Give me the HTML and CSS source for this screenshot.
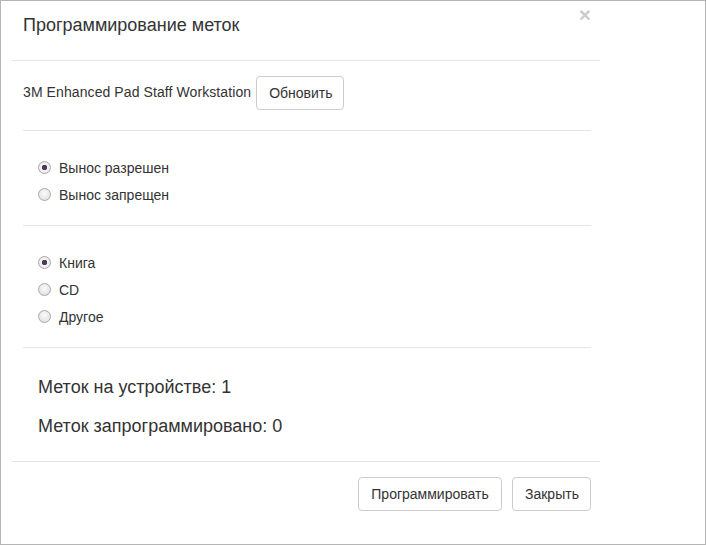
FILE: index.html
```html
<!DOCTYPE html>
<html lang="ru">
<head>
    <meta charset="UTF-8">
    <title>Программирование меток</title>
    <link rel="stylesheet" href="styles.css">
</head>
<body>
    <div class="frame">
        <div class="dialog">
            <div class="dialog-header">
                <h4 class="title">Программирование меток</h4>
                <span class="close">&times;</span>
            </div>
            <div class="dialog-body">
                <div class="section device">
                    <span class="device-name">3M Enhanced Pad Staff Workstation</span>
                    <button class="btn btn-refresh">Обновить</button>
                </div>
                <div class="section group">
                    <label class="radio"><input type="radio" name="exit" checked> Вынос разрешен</label>
                    <label class="radio"><input type="radio" name="exit"> Вынос запрещен</label>
                </div>
                <div class="section group">
                    <label class="radio"><input type="radio" name="kind" checked> Книга</label>
                    <label class="radio"><input type="radio" name="kind"> CD</label>
                    <label class="radio"><input type="radio" name="kind"> Другое</label>
                </div>
                <div class="stats">
                    <p>Меток на устройстве: 1</p>
                    <p>Меток запрограммировано: 0</p>
                </div>
            </div>
            <div class="dialog-footer">
                <button class="btn btn-program">Программировать</button>
                <button class="btn btn-close">Закрыть</button>
            </div>
        </div>
    </div>
</body>
</html>
```

FILE: styles.css
```css
body{
    margin: 0;
    padding: 0;
    font-family: "Liberation Sans", Arial, sans-serif;
    color: #333;
}
.frame{
    width: 706px;
    height: 545px;
    box-sizing: border-box;
    border: 1px solid #b5b5b5;
    background: #fff;
}
.dialog{
    margin-left: 11px;
    width: 588px;
}
.dialog-header{
    height: 59px;
    border-bottom: 1px solid #e5e5e5;
    display: flex;
    justify-content: space-between;
    padding: 0 9px 0 11px;
}
.title{
    margin: 13px 0 0;
    font-size: 18px;
    font-weight: normal;
    line-height: 22px;
}
.close{
    margin-top: 3px;
    font-size: 21px;
    font-weight: bold;
    line-height: 21px;
    color: #000;
    opacity: .2;
}
.dialog-body{
    padding: 0 9px 0 11px;
}
.section{
    border-bottom: 1px solid #e5e5e5;
}
.device{
    display: flex;
    align-items: center;
    gap: 5px;
    padding: 15px 0 20px;
    font-size: 14px;
    line-height: 20px;
}
.device-name{
    margin-top: -3px;
    letter-spacing: 0.09px;
}
.btn{
    font-family: inherit;
    font-size: 14px;
    color: #333;
    background: #fff;
    border: 1px solid #ccc;
    border-radius: 4px;
    height: 34px;
    padding: 0 12px;
}
.btn-refresh{
    width: 88px;
}
.group{
    padding: 23px 15px 17px;
}
.radio{
    display: flex;
    align-items: center;
    height: 27px;
    font-size: 14px;
}
.radio input{
    appearance: none;
    -webkit-appearance: none;
    margin: 0 8px 0 0;
    width: 13px;
    height: 13px;
    border-radius: 50%;
    border: 1px solid #a9a9a9;
    background: radial-gradient(circle at 50% 40%, #fbfbfb 0, #e4e4e4 70%, #d6d6d6 100%);
    box-sizing: border-box;
}
.radio input:checked{
    background: radial-gradient(circle, #4e3a5e 0, #4e3a5e 2.5px, #f4f4f4 3px, #e2e2e2 100%);
}
.stats{
    padding: 28px 15px 24px;
    font-size: 18px;
}
.stats p{
    margin: 0 0 17px;
    line-height: 22px;
}
.stats p:last-child{
    margin-bottom: 0;
}
.dialog-footer{
    border-top: 1px solid #e5e5e5;
    padding: 15px 9px 0;
    display: flex;
    justify-content: flex-end;
    gap: 10px;
}
.btn-program{
    width: 144px;
}
.btn-close{
    width: 79px;
}
```
